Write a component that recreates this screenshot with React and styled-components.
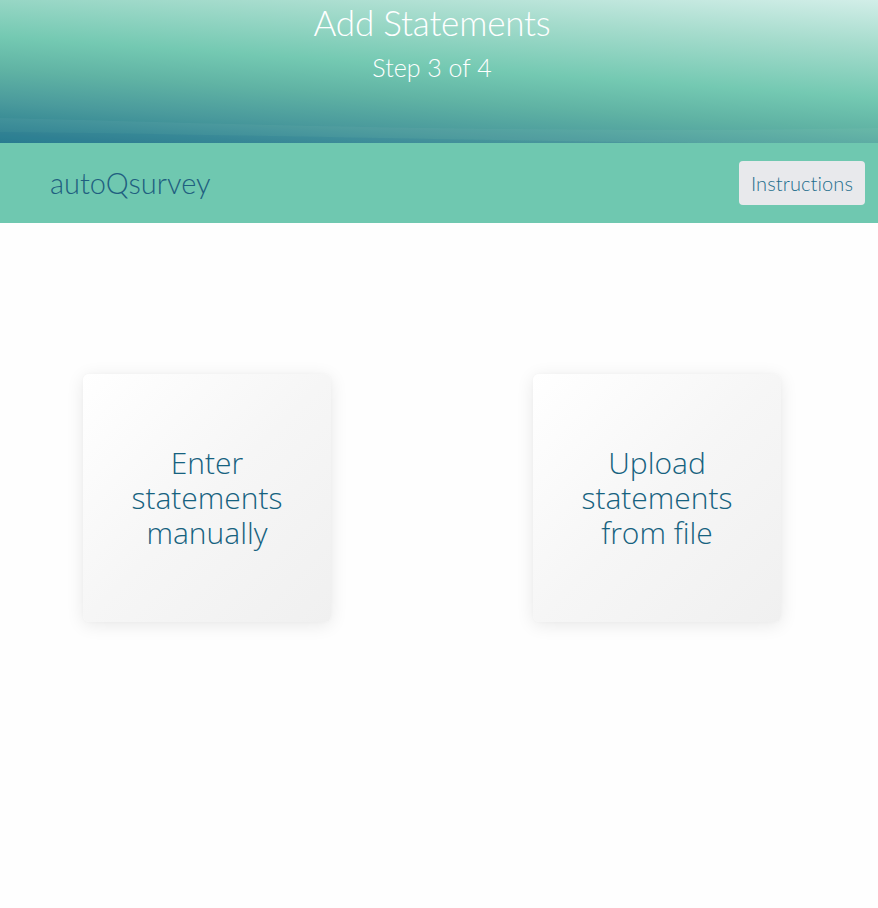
import React from "react";
import styled, { createGlobalStyle } from "styled-components";

const Global = createGlobalStyle`
  html, body { margin: 0; padding: 0; background: #fefefe; }
  body { font-family: Lato, "Open Sans", sans-serif; }
`;

const Page = styled.div`
  width: 878px;
  min-height: 908px;
  background: #fefefe;
`;

const Hero = styled.header`
  height: 143px;
  position: relative;
  overflow: hidden;
  background: linear-gradient(184deg, #d2eee8 0%, #a6dccd 22%, #74c9b2 48%, #60b3a4 64%, #4a9a9c 80%, #247a8d 100%);
  display: flex;
  flex-direction: column;
  align-items: center;
  padding-right: 14px;
  box-sizing: border-box;
`;

const Title = styled.h1`
  position: relative;
  margin: 1px 0 0;
  font-family: Lato, sans-serif;
  font-weight: 300;
  font-size: 35px;
  line-height: 42px;
  color: #ffffff;
  letter-spacing: -0.2px;
`;

const Subtitle = styled.div`
  position: relative;
  margin-top: 9px;
  font-family: Lato, sans-serif;
  font-weight: 300;
  font-size: 25px;
  line-height: 30px;
  color: #ffffff;
`;

const Wave = styled.svg`
  position: absolute;
  left: 0;
  top: 0;
  width: 100%;
  height: 100%;
  pointer-events: none;
`;

const NavBar = styled.nav`
  height: 80px;
  background: #6fc8b0;
  display: flex;
  align-items: center;
  justify-content: space-between;
  padding: 0 13px 0 50px;
`;

const Brand = styled.div`
  font-family: Lato, sans-serif;
  font-weight: 300;
  font-size: 29px;
  color: #1f5f80;
  margin-bottom: 1px;
`;

const NavButton = styled.button`
  width: 126px;
  height: 44px;
  border: none;
  border-radius: 4px;
  background: #e8e9ec;
  color: #1f6e8c;
  font-family: Lato, sans-serif;
  font-weight: 300;
  font-size: 20px;
  letter-spacing: 0.1px;
  padding: 0;
`;

const Choices = styled.main`
  display: flex;
  gap: 202px;
  padding: 151px 0 0 83px;
`;

const Card = styled.button`
  width: 248px;
  height: 248px;
  border: none;
  border-radius: 6px;
  background: linear-gradient(135deg, #ffffff 0%, #f6f6f6 50%, #f0f0f0 100%);
  box-shadow: 0 3px 18px rgba(0, 0, 0, 0.09), 0 0 3px rgba(0,0,0,0.03);
  display: flex;
  align-items: center;
  justify-content: center;
  padding: 0 16px 2px;
  font-family: "Open Sans", Lato, sans-serif;
  font-weight: 300;
  font-size: 30px;
  line-height: 35px;
  color: #16627f;
  text-align: center;
  cursor: pointer;
`;

export default function App() {
  return (
    <Page>
      <Global />
      <Hero>
        <Wave viewBox="0 0 878 143" preserveAspectRatio="none">
          <path d="M0 118 C 250 124, 520 134, 878 128 L878 143 L0 143 Z" fill="rgba(255,255,255,0.04)" />
          <path d="M0 132 C 200 134, 450 140, 700 143 L0 143 Z" fill="rgba(20,100,140,0.12)" />
        </Wave>
        <Title>Add Statements</Title>
        <Subtitle>Step 3 of 4</Subtitle>
      </Hero>
      <NavBar>
        <Brand>autoQsurvey</Brand>
        <NavButton>Instructions</NavButton>
      </NavBar>
      <Choices>
        <Card>Enter statements manually</Card>
        <Card>Upload statements from file</Card>
      </Choices>
    </Page>
  );
}
